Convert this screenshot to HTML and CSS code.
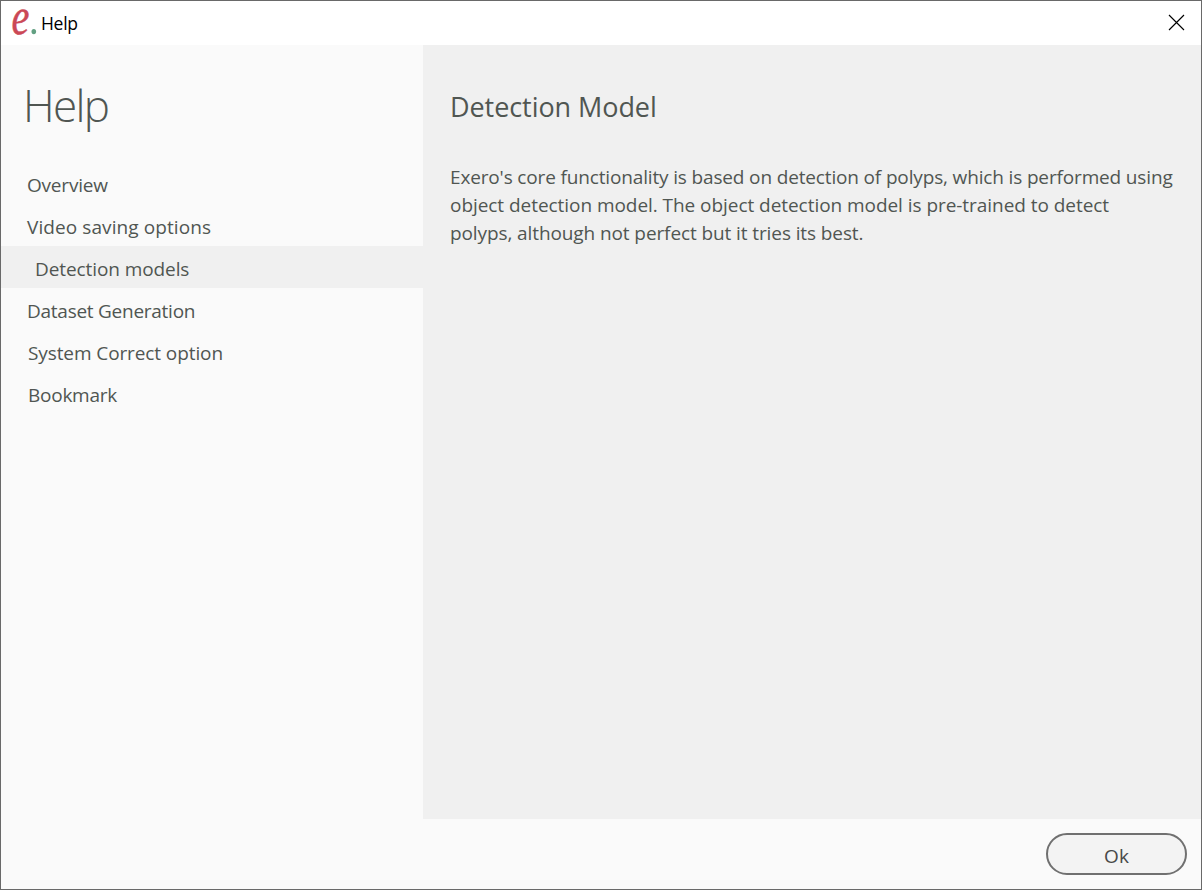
FILE: index.html
```
<!DOCTYPE html>
<html lang="en">
<head>
<meta charset="utf-8">
<title>Help</title>
<link rel="stylesheet" href="styles.css">
</head>
<body>
<div class="window">
  <header class="titlebar">
    <svg class="logo" width="28" height="30" viewBox="0 0 28 30">
      <text class="logo-letter" transform="translate(.4 26) scale(.76 1)">e</text>
      <ellipse cx="22.8" cy="23.6" rx="2.3" ry="2.7" fill="#62a082"/>
    </svg>
    <span class="caption">Help</span>
    <svg class="close" width="17" height="17" viewBox="0 0 17 17"><path d="M1 1 16 16M16 1 1 16" stroke="#000" stroke-width="1.15" fill="none"/></svg>
  </header>
  <main class="body">
    <aside class="sidebar">
      <h1 class="heading">Help</h1>
      <nav class="menu">
        <a class="item"><span class="overview">Overview</span></a>
        <a class="item"><span class="video">Video saving options</span></a>
        <a class="item selected"><span class="detection">Detection models</span></a>
        <a class="item"><span class="dataset">Dataset Generation</span></a>
        <a class="item shifted"><span class="system">System Correct option</span></a>
        <a class="item shifted"><span class="bookmark">Bookmark</span></a>
      </nav>
    </aside>
    <section class="content">
      <h2 class="title">Detection Model</h2>
      <p class="text"><span class="line1">Exero's core functionality is based on detection of polyps, which is performed using</span><br><span class="line2">object detection model. The object detection model is pre-trained to detect</span><br><span class="line3">polyps, although not perfect but it tries its best.</span></p>
    </section>
  </main>
  <footer class="footer"><button class="ok">Ok</button></footer>
</div>
</body>
</html>
```
FILE: styles.css
```
* { box-sizing: border-box; }
body { margin: 0; font-family: "Open Sans", "Noto Sans", sans-serif; color: #505652; }
.window { width: 1202px; height: 890px; border: 1px solid #696969; background: #fafafa; display: flex; flex-direction: column; }
.titlebar { height: 44px; flex: none; background: #fff; display: flex; align-items: center; padding: 0 16px 0 10px; }
.logo { flex: none; overflow: visible; }
.logo-letter { font: italic 53px "Liberation Serif", serif; fill: #cb4856; stroke: #cb4856; stroke-width: .5px; }
.caption { flex: 1; margin-left: 2px; font-size: 17.5px; letter-spacing: -.3px; color: #000; }
.close { flex: none; margin-bottom: 2px; }
.body { display: flex; height: 774px; }
.sidebar { width: 422px; }
.heading { margin: 0; padding: 28px 0 0 22px; height: 117px; font-weight: 300; font-size: 44px; line-height: 64px; letter-spacing: -1.7px; }
.menu { display: flex; flex-direction: column; }
.item { height: 42px; padding: 4px 0 0 26px; line-height: 38px; font-size: 19px; white-space: nowrap; }
.item.shifted { padding-left: 27px; }
.item.selected { background: #f0f0f0; padding-left: 34px; }
.overview { letter-spacing: -.2px; }
.video { letter-spacing: .09px; }
.detection { letter-spacing: -.09px; }
.dataset { letter-spacing: -.26px; }
.system { letter-spacing: -.1px; }
.bookmark { letter-spacing: -.25px; }
.content { flex: 1; background: #f0f0f0; padding: 42px 0 0 27px; }
.title { margin: 0; font-weight: 400; font-size: 27px; line-height: 40px; letter-spacing: -.07px; }
.text { margin: 36px 0 0; font-size: 19px; line-height: 28px; white-space: nowrap; }
.line1 { letter-spacing: -.15px; }
.line2 { letter-spacing: -.05px; }
.line3 { letter-spacing: -.1px; }
.footer { flex: 1; display: flex; justify-content: flex-end; padding: 14px 14px 0 0; }
.ok { width: 141px; height: 42px; border: 2px solid #707070; border-radius: 21px; background: #f3f3f3; font: 19px "Open Sans", "Noto Sans", sans-serif; color: #484848; padding: 3px 0 0; }
```
